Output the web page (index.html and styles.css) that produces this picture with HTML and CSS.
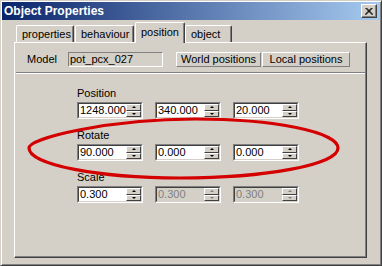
FILE: index.html
```html
<!DOCTYPE html>
<html lang="en">
<head>
    <meta charset="UTF-8">
    <title>Object Properties</title>
    <link rel="stylesheet" href="styles.css">
</head>
<body>
    <div class="screen">
        <div class="window">
            <div class="titlebar">
                <span class="title">Object Properties</span>
                <button class="close" type="button">
                    <svg width="8" height="7" viewBox="0 0 8 7">
                        <path d="M0.5 0 L7.5 7 M1.5 0 L8 6.5 M7.5 0 L0.5 7 M6.5 0 L0 6.5" stroke="#000" stroke-width="1" fill="none"/>
                    </svg>
                </button>
            </div>

            <div class="content">
                <div class="tabs">
                    <div class="tab tab-properties">properties</div>
                    <div class="tab tab-behaviour">behaviour</div>
                    <div class="tab tab-position active">position</div>
                    <div class="tab tab-object">object</div>
                </div>

                <div class="panel">
                    <div class="model-row">
                        <span class="model-label">Model</span>
                        <div class="readonly-field">pot_pcx_027</div>
                        <div class="button-row">
                            <button class="btn btn-world" type="button">World positions</button>
                            <button class="btn btn-local" type="button">Local positions</button>
                        </div>
                    </div>

                    <div class="separator"></div>

                    <div class="groups">
                        <div class="group">
                            <div class="group-label">Position</div>
                            <div class="spins">
                                <div class="spin"><div class="spin-inner"><span class="spin-value">1248.000</span><span class="spin-buttons"><span class="up"></span><span class="down"></span></span></div></div>
                                <div class="spin"><div class="spin-inner"><span class="spin-value">340.000</span><span class="spin-buttons"><span class="up"></span><span class="down"></span></span></div></div>
                                <div class="spin"><div class="spin-inner"><span class="spin-value">20.000</span><span class="spin-buttons"><span class="up"></span><span class="down"></span></span></div></div>
                            </div>
                        </div>
                        <div class="group">
                            <div class="group-label">Rotate</div>
                            <div class="spins">
                                <div class="spin"><div class="spin-inner"><span class="spin-value">90.000</span><span class="spin-buttons"><span class="up"></span><span class="down"></span></span></div></div>
                                <div class="spin"><div class="spin-inner"><span class="spin-value">0.000</span><span class="spin-buttons"><span class="up"></span><span class="down"></span></span></div></div>
                                <div class="spin"><div class="spin-inner"><span class="spin-value">0.000</span><span class="spin-buttons"><span class="up"></span><span class="down"></span></span></div></div>
                            </div>
                        </div>
                        <div class="group">
                            <div class="group-label">Scale</div>
                            <div class="spins">
                                <div class="spin"><div class="spin-inner"><span class="spin-value">0.300</span><span class="spin-buttons"><span class="up"></span><span class="down"></span></span></div></div>
                                <div class="spin disabled"><div class="spin-inner"><span class="spin-value">0.300</span><span class="spin-buttons"><span class="up"></span><span class="down"></span></span></div></div>
                                <div class="spin disabled"><div class="spin-inner"><span class="spin-value">0.300</span><span class="spin-buttons"><span class="up"></span><span class="down"></span></span></div></div>
                            </div>
                        </div>
                    </div>
                </div>
            </div>
        </div>

        <!-- red marker drawn over the rotate row -->
        <svg class="markup" width="382" height="266" viewBox="0 0 382 266">
            <path d="M29 148 C29 138 110 119 195 119 C274 119 338 132 338 148 C338 164.5 267 178 180 178 C97 178 29 164.5 29 148 Z"
                  fill="none" stroke="#d40000" stroke-width="3.2"/>
        </svg>
    </div>
</body>
</html>
```

FILE: styles.css
```css
* {
    box-sizing: border-box;
}
body {
    margin: 0;
    background-color: #d4d0c8;
    font-family: "Liberation Sans", Arial, sans-serif;
    font-size: 11px;
    color: #000;
}
.screen {
    position: relative;
    width: 382px;
    height: 266px;
    overflow: hidden;
}
.window {
    width: 382px;
    height: 266px;
    display: flex;
    flex-direction: column;
    padding: 1px;
    background-color: #d4d0c8;
    border: 1px solid;
    border-color: #d4d0c8 #404040 #404040 #d4d0c8;
    box-shadow: inset 1px 1px #fff, inset -1px -1px #808080;
}

/* title bar */
.titlebar {
    height: 18px;
    display: flex;
    align-items: center;
    justify-content: space-between;
    padding: 0 3px 0 2px;
    background: linear-gradient(to right, #0a246a, #a6caf0);
}
.title {
    color: #fff;
    font-weight: bold;
    font-size: 12px;
}
.close {
    width: 16px;
    height: 14px;
    padding: 0;
    display: flex;
    align-items: center;
    justify-content: center;
    background-color: #d4d0c8;
    border: 1px solid;
    border-color: #fff #404040 #404040 #fff;
    box-shadow: inset -1px -1px #808080;
}

/* tabs + panel */
.content {
    flex: 1;
    display: flex;
    flex-direction: column;
    padding: 2px 13px 6px 12px;
}
.tabs {
    display: flex;
    align-items: flex-end;
    height: 20px;
    padding-left: 2px;
    position: relative;
    z-index: 1;
}
.tab {
    height: 17px;
    padding-left: 5px;
    line-height: 16px;
    white-space: nowrap;
    background-color: #d4d0c8;
    border-top: 1px solid #fff;
    border-left: 1px solid #fff;
    border-right: 1px solid #404040;
    border-radius: 2px 2px 0 0;
    box-shadow: inset -1px 0 #808080;
}
.tab-properties { width: 58px; }
.tab-behaviour { width: 59px; margin-left: 1px; }
.tab-position { width: 50px; margin-left: 1px; }
.tab-object { width: 47px; }
.tab.active {
    height: 21px;
    margin-bottom: -1px;
    padding-top: 1px;
}
.panel {
    flex: 1;
    background-color: #d4d0c8;
    border: 1px solid;
    border-color: #fff #404040 #404040 #fff;
    box-shadow: inset -1px -1px #808080;
}

/* model row */
.model-row {
    display: flex;
    padding: 9px 0 0 12px;
}
.model-label {
    width: 41px;
    line-height: 15px;
}
.readonly-field {
    width: 95px;
    height: 15px;
    padding-left: 1px;
    line-height: 13px;
    border: 1px solid;
    border-color: #808080 #fff #fff #808080;
}
.button-row {
    display: flex;
    gap: 1px;
    margin-left: 13px;
}
.btn {
    height: 15px;
    padding: 0;
    font-family: inherit;
    font-size: 11px;
    line-height: 13px;
    color: #000;
    background-color: #d4d0c8;
    border: 1px solid;
    border-color: #fff #808080 #808080 #fff;
}
.btn-world { width: 85px; }
.btn-local { width: 88px; }
.separator {
    height: 2px;
    margin: 5px 1px 0;
    border-top: 1px solid #808080;
    border-bottom: 1px solid #fff;
}

/* spin groups */
.groups {
    padding: 12px 0 0 62px;
}
.group + .group {
    margin-top: 9px;
}
.group-label {
    line-height: 14px;
    margin-bottom: 2px;
}
.spins {
    display: flex;
    gap: 12px;
}
.spin {
    width: 66px;
    height: 17px;
    border: 1px solid;
    border-color: #808080 #fff #fff #808080;
}
.spin-inner {
    height: 100%;
    display: flex;
    border: 1px solid;
    border-color: #404040 #d4d0c8 #d4d0c8 #404040;
    background-color: #fff;
}
.spin-value {
    flex: 1;
    line-height: 13px;
    padding-left: 1px;
}
.spin-buttons {
    width: 15px;
    display: flex;
    flex-direction: column;
}
.spin-buttons > span {
    flex: 1;
    display: flex;
    align-items: center;
    justify-content: center;
    background-color: #d4d0c8;
    border: 1px solid;
    border-color: #fff #404040 #404040 #fff;
}
.spin-buttons .up::after,
.spin-buttons .down::after {
    content: "";
    width: 0;
    height: 0;
    border-left: 2px solid transparent;
    border-right: 2px solid transparent;
}
.spin-buttons .up::after {
    border-bottom: 2px solid #000;
}
.spin-buttons .down::after {
    border-top: 2px solid #000;
}
.spin.disabled .spin-inner {
    background-color: #d4d0c8;
}
.spin.disabled .spin-value {
    color: #808080;
}
.spin.disabled .up::after {
    border-bottom-color: #808080;
}
.spin.disabled .down::after {
    border-top-color: #808080;
}

/* annotation overlay */
.markup {
    position: absolute;
    top: 0;
    left: 0;
    pointer-events: none;
}
```
